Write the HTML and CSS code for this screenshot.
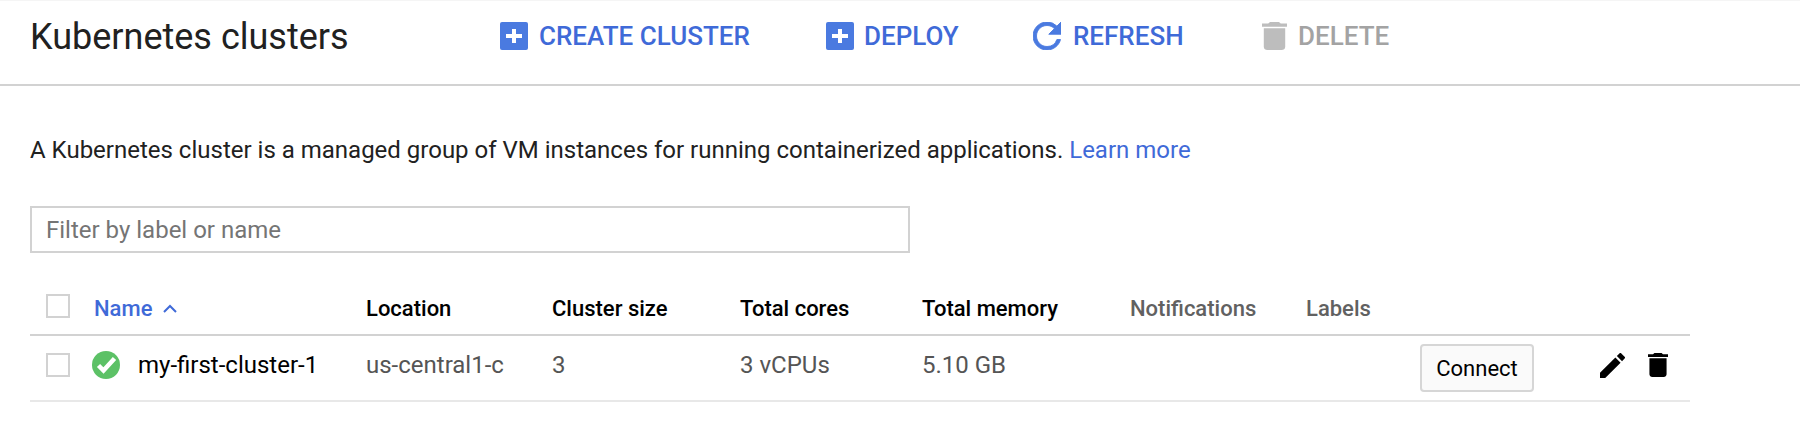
FILE: index.html
```html
<!DOCTYPE html>
<html lang="en">
<head>
  <meta charset="UTF-8">
  <title>Kubernetes clusters</title>
  <link rel="stylesheet" href="styles.css">
</head>
<body>

  <div class="toolbar">
    <h1 class="page-title">Kubernetes clusters</h1>
    <a class="tool tool-create">
      <svg class="tool-icon" viewBox="0 0 28 28"><rect width="28" height="28" rx="2" fill="#4a7ae0"/><path d="M12 7h4v5h6v4h-6v5h-4v-5H6v-4h6z" fill="#fff"/></svg>
      CREATE CLUSTER
    </a>
    <a class="tool tool-deploy">
      <svg class="tool-icon icon-deploy" viewBox="0 0 28 28"><rect width="28" height="28" rx="2" fill="#4a7ae0"/><path d="M12 7h4v5h6v4h-6v5h-4v-5H6v-4h6z" fill="#fff"/></svg>
      DEPLOY
    </a>
    <a class="tool tool-refresh">
      <svg class="tool-icon icon-refresh" viewBox="4 4 16 16"><path d="M17.650 6.350A7.958 7.958 0 0 0 12 4c-4.420 0-7.990 3.580-7.990 8s3.570 8 7.990 8c3.730 0 6.840-2.550 7.730-6h-2.080A5.990 5.990 0 0 1 12 18c-3.310 0-6-2.690-6-6s2.690-6 6-6c1.660 0 3.140.690 4.220 1.780L13 11h7V4l-2.350 2.350z" fill="#4a7ae0" stroke="#4a7ae0" stroke-width="0.5"/></svg>
      REFRESH
    </a>
    <a class="tool tool-delete">
      <svg class="tool-icon icon-bin" viewBox="5 3 14 18" preserveAspectRatio="none"><path d="M6 19c0 1.100.9 2 2 2h8c1.100 0 2-.9 2-2V7H6v12zM19 4h-3.500l-1-1h-5l-1 1H5v2h14V4z" fill="#bdbdbd"/></svg>
      DELETE
    </a>
  </div>

  <div class="content">
    <p class="intro">A Kubernetes cluster is a managed group of VM instances for running containerized applications. <a class="link">Learn more</a></p>

    <input class="filter" type="text" placeholder="Filter by label or name">

    <div class="cluster-table">
      <div class="row head-row">
        <span class="check"></span>
        <span class="col-name sorted">Name
          <svg class="sort-icon" viewBox="0 0 14 9"><path d="M1 8l6-6 6 6" fill="none" stroke="#3f6ad8" stroke-width="2"/></svg>
        </span>
        <span>Location</span>
        <span>Cluster size</span>
        <span>Total cores</span>
        <span>Total memory</span>
        <span class="muted">Notifications</span>
        <span class="muted">Labels</span>
      </div>
      <div class="row body-row">
        <span class="check"></span>
        <span class="col-name">
          <svg class="status-icon" viewBox="0 0 28 28"><circle cx="14" cy="14" r="14" fill="#5cc166"/><path d="M6.500 14.500l5 5L22.500 7.500" fill="none" stroke="#fff" stroke-width="4.500"/></svg>
          <span class="cluster-name">my-first-cluster-1</span>
        </span>
        <span>us-central1-c</span>
        <span>3</span>
        <span>3 vCPUs</span>
        <span>5.10 GB</span>
        <span></span>
        <span></span>
        <button class="connect">Connect</button>
        <svg class="pencil" viewBox="3 3 18 18"><path d="M3 17.250V21h3.750L17.810 9.940l-3.750-3.750L3 17.250zM20.710 7.040a.996.996 0 0 0 0-1.410l-2.340-2.340a.996.996 0 0 0-1.410 0l-1.830 1.830 3.750 3.750 1.830-1.830z" fill="#000"/></svg>
        <svg class="bin" viewBox="5 3 14 18" preserveAspectRatio="none"><path d="M6 19c0 1.100.9 2 2 2h8c1.100 0 2-.9 2-2V7H6v12zM19 4h-3.500l-1-1h-5l-1 1H5v2h14V4z" fill="#000"/></svg>
      </div>
    </div>
  </div>

</body>
</html>
```

FILE: styles.css
```css
html, body {
  margin: 0;
  padding: 0;
}

body {
  font-family: Roboto, "Liberation Sans", sans-serif;
  background-color: #fff;
  color: #000;
}

.toolbar {
  display: flex;
  align-items: center;
  height: 83px;
  padding-left: 30px;
  border-top: 1px solid #f5f5f5;
  border-bottom: 2px solid #d2d2d2;
}

.page-title {
  width: 470px;
  margin: 0 0 12px;
  font-size: 36px;
  font-weight: 400;
  color: #212121;
}

.tool {
  display: flex;
  align-items: center;
  margin: 0 0 14px;
  font-size: 26px;
  font-weight: 500;
  color: #3f6ad8;
}

.tool-icon {
  width: 28px;
  height: 28px;
  margin-right: 11px;
}

.tool-create { width: 326px; }
.tool-deploy { width: 207px; }
.tool-refresh { width: 229px; }
.tool-delete { color: #a3a3a3; }

.icon-deploy { margin-right: 10px; }
.icon-refresh { margin-right: 12px; }
.icon-bin { width: 25px; }

.content {
  padding: 50px 110px 0 30px;
}

.intro {
  margin: 0 0 42px;
  font-size: 24px;
  line-height: 28px;
  color: #212121;
}

.link {
  color: #3f6ad8;
}

.filter {
  display: block;
  width: 880px;
  height: 47px;
  box-sizing: border-box;
  margin-bottom: 29px;
  padding: 0 14px;
  border: 2px solid #d2d2d2;
  font-family: inherit;
  font-size: 24px;
}

.filter::placeholder {
  color: #757575;
}

.row {
  display: grid;
  grid-template-columns: 64px 272px 186px 188px 182px 208px 176px 114px 114px 91px 42px;
  align-items: center;
}

.head-row {
  height: 52px;
  font-size: 22px;
  font-weight: 500;
  border-bottom: 2px solid #d2d2d2;
}

.head-row .check {
  margin-top: -5px;
}

.body-row {
  height: 58px;
  padding-bottom: 6px;
  color: #555;
  font-size: 24px;
  border-bottom: 2px solid #e8e8e8;
}

.check {
  width: 20px;
  height: 20px;
  margin-left: 16px;
  border: 2px solid #d2d2d2;
}

.col-name {
  display: flex;
  align-items: center;
}

.sorted {
  color: #3f6ad8;
}

.sort-icon {
  width: 14px;
  height: 9px;
  margin-left: 11px;
}

.muted {
  color: #616161;
}

.status-icon {
  width: 28px;
  height: 28px;
  margin-right: 18px;
  margin-left: -2px;
}

.cluster-name {
  color: #000;
}

.connect {
  width: 114px;
  height: 48px;
  margin-top: 6px;
  border: 2px solid #d6d6d6;
  border-radius: 4px;
  background-color: #fafafa;
  font-family: inherit;
  font-size: 22px;
  color: #000;
}

.pencil {
  width: 25px;
  height: 25px;
  margin-left: 66px;
}

.bin {
  width: 20px;
  height: 24px;
  margin-left: 23px;
}
```
